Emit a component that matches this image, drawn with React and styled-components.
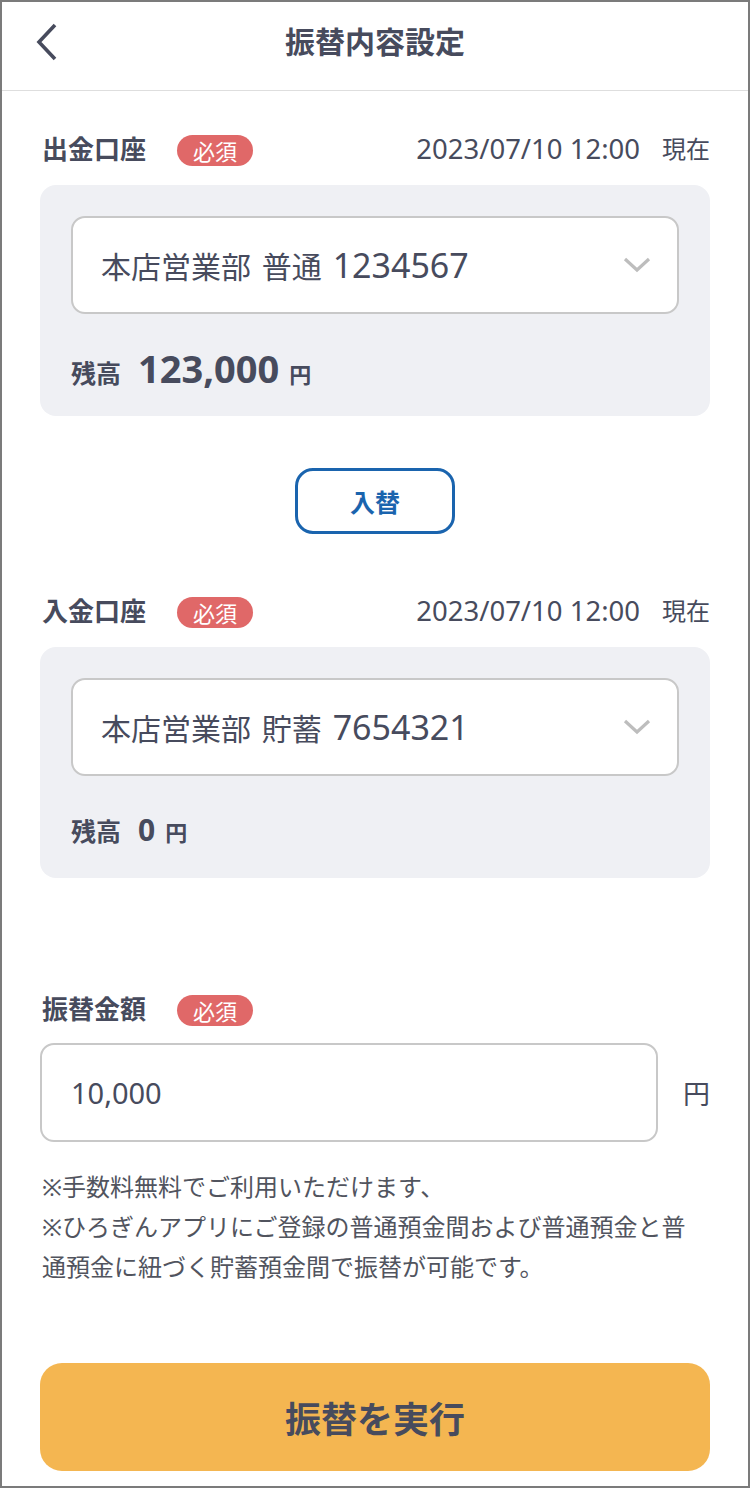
import styled, { createGlobalStyle } from "styled-components";

const GlobalStyle = createGlobalStyle`
  body {
    margin: 0;
    background: #fff;
  }
  * {
    box-sizing: border-box;
  }
`;

const ink = "#474b5d";

const AccountSection = ({ title, top, account, number, balance, balanceSize }) => (
  <Section $top={top}>
    <LabelRow>
      <Label>{title}</Label>
      <Badge>必須</Badge>
      <Stamp>2023/07/10 12:00</Stamp>
      <Now>現在</Now>
    </LabelRow>
    <Card>
      <Select>
        <span>
          {account} <Num>{number}</Num>
        </span>
        <svg width="28" height="16" viewBox="0 0 28 16">
          <polyline
            points="2,2 14,13 26,2"
            fill="none"
            stroke="#bdbdbd"
            strokeWidth="3.2"
          />
        </svg>
      </Select>
      <Balance>
        <BalanceLabel>残高</BalanceLabel>
        <Amount $size={balanceSize}>{balance}</Amount>
        <Yen>円</Yen>
      </Balance>
    </Card>
  </Section>
);

const App = () => {
  return (
    <>
      <GlobalStyle />
      <Frame>
        <Header>
          <Back>
            <svg width="22" height="38" viewBox="0 0 22 38">
              <polyline
                points="19,2 3,19 19,36"
                fill="none"
                stroke={ink}
                strokeWidth="3.6"
              />
            </svg>
          </Back>
          <Title>振替内容設定</Title>
          <span />
        </Header>
        <Content>
          <AccountSection
            title="出金口座"
            top={42}
            account="本店営業部 普通"
            number="1234567"
            balance="123,000"
            balanceSize={38}
          />
          <SwapRow>
            <SwapButton>入替</SwapButton>
          </SwapRow>
          <AccountSection
            title="入金口座"
            top={61}
            account="本店営業部 貯蓄"
            number="7654321"
            balance="0"
            balanceSize={30}
          />
          <Section $top={115}>
            <LabelRow>
              <Label>振替金額</Label>
              <Badge>必須</Badge>
            </LabelRow>
            <InputRow>
              <AmountInput readOnly defaultValue="10,000" />
              <InputYen>円</InputYen>
            </InputRow>
            <Notes>
              ※手数料無料でご利用いただけます、
              <br />
              ※ひろぎんアプリにご登録の普通預金間および普通預金と普通預金に紐づく貯蓄預金間で振替が可能です。
            </Notes>
          </Section>
          <Submit>振替を実行</Submit>
        </Content>
      </Frame>
    </>
  );
};

const Frame = styled.div`
  width: 750px;
  height: 1488px;
  border: 2px solid #7b7b7b;
  background: #fff;
  color: ${ink};
  font-family: "Noto Sans", "Noto Sans CJK JP", sans-serif;
`;

const Header = styled.header`
  display: grid;
  grid-template-columns: 90px 1fr 90px;
  align-items: center;
  height: 89px;
  padding-bottom: 9px;
  border-bottom: 1px solid #dedede;
`;

const Back = styled.div`
  display: flex;
  padding-left: 34px;
`;

const Title = styled.h1`
  margin: 0;
  text-align: center;
  font-size: 30px;
  font-weight: 700;
  line-height: 1;
`;

const Content = styled.main`
  padding: 0 38px;
`;

const Section = styled.section`
  margin-top: ${(p) => p.$top}px;
`;

const LabelRow = styled.div`
  display: flex;
  align-items: center;
  height: 34px;
`;

const Label = styled.span`
  margin-left: 2px;
  font-size: 26px;
  font-weight: 700;
  line-height: 1;
  padding-bottom: 3px;
`;

const Badge = styled.span`
  display: flex;
  align-items: center;
  justify-content: center;
  width: 76px;
  height: 31px;
  margin-left: 31px;
  border-radius: 16px;
  background: #e06868;
  color: #fff;
  font-size: 22px;
`;

const Stamp = styled.span`
  margin-left: auto;
  font-size: 27.5px;
  line-height: 1;
  padding-bottom: 3px;
`;

const Now = styled.span`
  margin-left: 22px;
  font-size: 24px;
  line-height: 1;
  padding-bottom: 3px;
`;

const Card = styled.div`
  margin-top: 18px;
  padding: 31px 31px 28px;
  border-radius: 16px;
  background: #eff0f4;
`;

const Select = styled.div`
  display: flex;
  align-items: center;
  justify-content: space-between;
  height: 98px;
  padding: 0 26px 0 28px;
  border: 2px solid #c8c8c8;
  border-radius: 14px;
  background: #fff;
  font-size: 30px;
  word-spacing: 3px;
`;

const Num = styled.span`
  font-size: 34px;
`;

const Balance = styled.div`
  display: flex;
  align-items: baseline;
  height: 40px;
  margin-top: 34px;
`;

const BalanceLabel = styled.span`
  margin-right: 17px;
  font-size: 25px;
  font-weight: 700;
`;

const Amount = styled.span`
  font-size: ${(p) => p.$size}px;
  font-weight: 700;
  line-height: 40px;
`;

const Yen = styled.span`
  margin-left: 10px;
  font-size: 22px;
  font-weight: 700;
`;

const SwapRow = styled.div`
  display: flex;
  justify-content: center;
  margin-top: 52px;
`;

const SwapButton = styled.button`
  width: 160px;
  height: 66px;
  border: 3px solid #1a64ae;
  border-radius: 18px;
  background: #fff;
  color: #1a64ae;
  font-family: inherit;
  font-size: 25px;
  font-weight: 700;
`;

const InputRow = styled.div`
  display: flex;
  align-items: center;
  margin-top: 16px;
`;

const AmountInput = styled.input`
  width: 618px;
  height: 99px;
  padding: 0 0 0 29px;
  border: 2px solid #c8c8c8;
  border-radius: 14px;
  background: #fff;
  color: ${ink};
  font-family: inherit;
  font-size: 29px;
  outline: none;
`;

const InputYen = styled.span`
  margin-left: auto;
  font-size: 27px;
`;

const Notes = styled.p`
  margin: 25px 16px 0 2px;
  color: #51545e;
  font-size: 24px;
  line-height: 40px;
`;

const Submit = styled.button`
  display: block;
  width: 100%;
  height: 108px;
  margin-top: 76px;
  border: none;
  border-radius: 22px;
  background: #f4b651;
  color: ${ink};
  font-family: inherit;
  font-size: 36px;
  font-weight: 700;
`;

export default App;
